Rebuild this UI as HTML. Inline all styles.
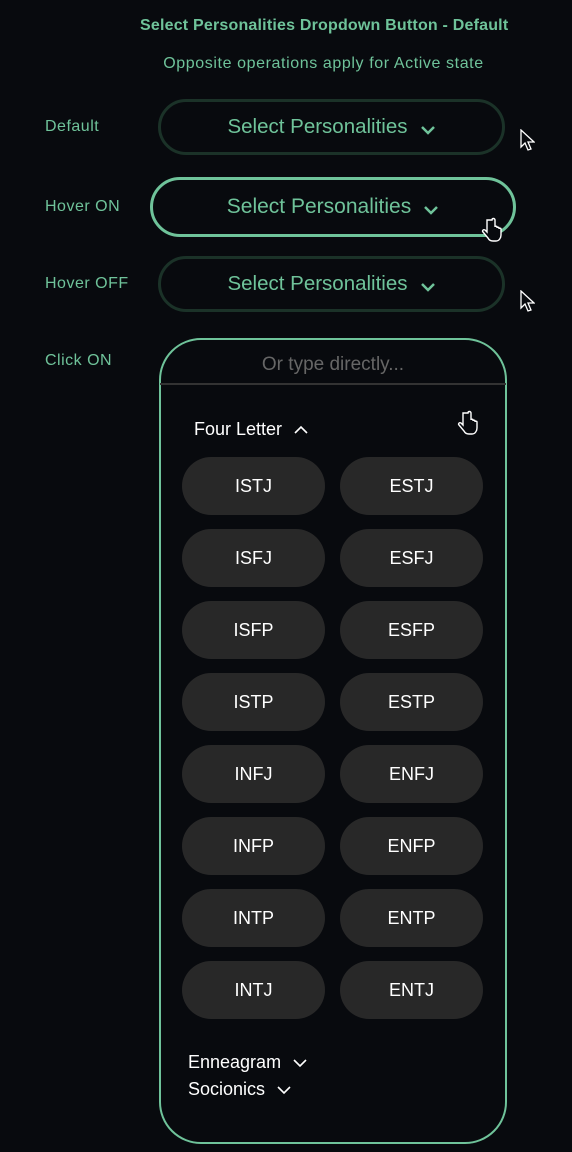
<!DOCTYPE html>
<html><head><style>
*{margin:0;padding:0;box-sizing:border-box}
body{width:572px;height:1152px;background:#080a0e;position:relative;font-family:"Liberation Sans",sans-serif;overflow:hidden}
.a{position:absolute}
.t1{left:140px;width:367px;top:17px;text-align:center;color:#6fc39a;font-weight:bold;font-size:16px;letter-spacing:0.2px;white-space:nowrap}
.t2{left:140px;width:367px;top:55px;text-align:center;color:#6fc39a;font-size:16px;letter-spacing:0.6px;white-space:nowrap}
.lbl{left:45px;color:#6fc39a;font-size:16px;letter-spacing:0.5px}
.btn{border-radius:30px;color:#6fc39a;font-size:20.5px;display:flex;align-items:center;justify-content:center}
.pill{width:143px;height:58px;border-radius:29px;background:#282828;color:#fff;font-size:18px;display:flex;align-items:center;justify-content:center}
.w{color:#fff;font-size:18px}
</style></head><body>
<div class="a t1">Select Personalities Dropdown Button - Default</div>
<div class="a t2">Opposite operations apply for Active state</div>
<div class="a lbl" style="top:118px">Default</div>
<div class="a lbl" style="top:198px">Hover ON</div>
<div class="a lbl" style="top:275px">Hover OFF</div>
<div class="a lbl" style="top:352px">Click ON</div>

<div class="a btn" style="left:158px;top:99px;width:347px;height:56px;border:3px solid #1b3228">Select Personalities <svg width="16" height="10" style="margin-left:12px;margin-top:6px"><path d="M2 2l6 6 6-6" stroke="#6fc39a" stroke-width="2.5" fill="none"/></svg></div>
<div class="a btn" style="left:150px;top:177px;width:366px;height:60px;border:3px solid #6fc39a;font-size:21px">Select Personalities <svg width="16" height="10" style="margin-left:12px;margin-top:6px"><path d="M2 2l6 6 6-6" stroke="#6fc39a" stroke-width="2.5" fill="none"/></svg></div>
<div class="a btn" style="left:158px;top:256px;width:347px;height:56px;border:3px solid #1b3228">Select Personalities <svg width="16" height="10" style="margin-left:12px;margin-top:6px"><path d="M2 2l6 6 6-6" stroke="#6fc39a" stroke-width="2.5" fill="none"/></svg></div>

<svg class="a" style="left:519px;top:129px" width="16" height="22"><path d="M2 1v17l4-4 3 7 3-1-3-7h6z" fill="#080a0e" stroke="#fff" stroke-width="1.3"/></svg>
<svg class="a" style="left:519px;top:290px" width="16" height="22"><path d="M2 1v17l4-4 3 7 3-1-3-7h6z" fill="#080a0e" stroke="#fff" stroke-width="1.3"/></svg>
<svg class="a" style="left:481px;top:217px" width="22" height="26"><path d="M6 3v12l-2-2c-2-1-3 1-2 2l5 6c1 2 3 3 5 3h3c3 0 5-3 5-6v-6c0-1-2-1-2 0v-1c0-1-2-1-2 0v-1c0-1-2-1-2 0V3c0-2-3-2-3 0z" fill="#080a0e" stroke="#fff" stroke-width="1.4"/></svg>
<svg class="a" style="left:457px;top:410px" width="22" height="26"><path d="M6 3v12l-2-2c-2-1-3 1-2 2l5 6c1 2 3 3 5 3h3c3 0 5-3 5-6v-6c0-1-2-1-2 0v-1c0-1-2-1-2 0v-1c0-1-2-1-2 0V3c0-2-3-2-3 0z" fill="#080a0e" stroke="#fff" stroke-width="1.4"/></svg>

<div class="a" style="left:159px;top:338px;width:348px;height:806px;border:2px solid #6fc39a;border-radius:42px"></div>
<div class="a" style="left:160px;top:383px;width:346px;height:2px;background:#333"></div>
<div class="a" style="left:159px;top:354px;width:348px;text-align:center;color:#666;font-size:19px">Or type directly...</div>
<div class="a w" style="left:194px;top:419px">Four Letter <svg width="16" height="10" style="margin-left:6px"><path d="M2 8l6-6 6 6" stroke="#fff" stroke-width="1.6" fill="none"/></svg></div>

<div class="a pill" style="left:182px;top:457px">ISTJ</div><div class="a pill" style="left:340px;top:457px">ESTJ</div>
<div class="a pill" style="left:182px;top:529px">ISFJ</div><div class="a pill" style="left:340px;top:529px">ESFJ</div>
<div class="a pill" style="left:182px;top:601px">ISFP</div><div class="a pill" style="left:340px;top:601px">ESFP</div>
<div class="a pill" style="left:182px;top:673px">ISTP</div><div class="a pill" style="left:340px;top:673px">ESTP</div>
<div class="a pill" style="left:182px;top:745px">INFJ</div><div class="a pill" style="left:340px;top:745px">ENFJ</div>
<div class="a pill" style="left:182px;top:817px">INFP</div><div class="a pill" style="left:340px;top:817px">ENFP</div>
<div class="a pill" style="left:182px;top:889px">INTP</div><div class="a pill" style="left:340px;top:889px">ENTP</div>
<div class="a pill" style="left:182px;top:961px">INTJ</div><div class="a pill" style="left:340px;top:961px">ENTJ</div>

<div class="a w" style="left:188px;top:1052px">Enneagram <svg width="16" height="10" style="margin-left:6px"><path d="M2 2l6 6 6-6" stroke="#fff" stroke-width="1.6" fill="none"/></svg></div>
<div class="a w" style="left:188px;top:1079px">Socionics <svg width="16" height="10" style="margin-left:6px"><path d="M2 2l6 6 6-6" stroke="#fff" stroke-width="1.6" fill="none"/></svg></div>
</body></html>
